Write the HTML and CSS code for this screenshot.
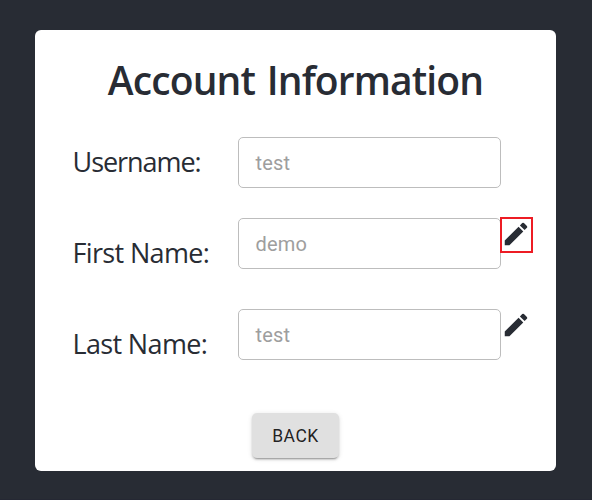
FILE: index.html
```html
<!DOCTYPE html>
<html lang="en">
<head>
<meta charset="utf-8">
<title>Account Information</title>
<link rel="stylesheet" href="styles.css">
</head>
<body>
<main class="card">
  <h1 class="title"><span class="title-text">Account Information</span></h1>
  <div class="row row-username">
    <span class="label label-username">Username:</span>
    <div class="field">test</div>
  </div>
  <div class="row row-name">
    <span class="label label-first">First Name:</span>
    <div class="field">demo</div>
    <span class="edit highlighted"><svg class="icon" viewBox="0 0 24 24"><path d="M3 17.25V21h3.75L17.81 9.94l-3.75-3.75L3 17.25zM20.71 7.04c.39-.39.39-1.02 0-1.41l-2.34-2.34a.996.996 0 0 0-1.41 0l-1.83 1.83 3.75 3.75 1.83-1.83z"/></svg></span>
  </div>
  <div class="row row-name">
    <span class="label label-last">Last Name:</span>
    <div class="field">test</div>
    <span class="edit"><svg class="icon" viewBox="0 0 24 24"><path d="M3 17.25V21h3.75L17.81 9.94l-3.75-3.75L3 17.25zM20.71 7.04c.39-.39.39-1.02 0-1.41l-2.34-2.34a.996.996 0 0 0-1.41 0l-1.83 1.83 3.75 3.75 1.83-1.83z"/></svg></span>
  </div>
  <button class="back">BACK</button>
</main>
</body>
</html>
```
FILE: styles.css
```css
* { box-sizing: border-box; }
body {
  margin: 0;
  height: 500px;
  padding: 30px 36px 28px 35px;
  border-bottom: 1px solid #252833;
  background: #282c34;
  color: #282c34;
  font-family: "Open Sans", "Noto Sans", sans-serif;
  overflow: hidden;
}
.card {
  height: 441px;
  padding: 25px 0 0 38px;
  background: #fff;
  border-radius: 6px;
  display: flex;
  flex-direction: column;
}
.title {
  margin: 0 38px 0 0;
  height: 52px;
  line-height: 50px;
  font-size: 39px;
  font-weight: 600;
  text-align: center;
  white-space: nowrap;
}
.title-text { letter-spacing: -0.88px; word-spacing: 2.5px; }
.row {
  display: grid;
  grid-template-columns: 165px 263px 33px;
  height: 51px;
}
.row-username { margin-top: 30px; }
.row-name { margin-top: 30px; }
.row-name + .row-name { margin-top: 40px; }
.label {
  margin-left: -0.5px;
  font-size: 27px;
  line-height: 50px;
  white-space: nowrap;
}
.row-name .label { padding-top: 10px; }
.label-username { letter-spacing: -1.05px; }
.label-first { letter-spacing: -0.65px; }
.label-last { letter-spacing: -0.65px; }
.field {
  height: 51px;
  padding-left: 16.5px;
  border: 1px solid #bdbdbd;
  border-radius: 5px;
  color: #9e9e9e;
  font: 20px/51px Roboto, sans-serif;
  letter-spacing: 0.2px;
}
.edit {
  width: 33px;
  height: 36px;
  margin: -1px 0 0 -1px;
  border: 2px solid transparent;
}
.highlighted { border-color: #ed1c24; }
.icon {
  display: block;
  width: 30px;
  height: 30px;
  margin: 0 0 0 -1px;
  fill: #282c34;
}
.back {
  align-self: center;
  width: 87px;
  height: 45px;
  margin: 53px 39px 0 0;
  padding: 2px 0 0 1px;
  border: 0;
  border-radius: 5px;
  background: #e0e0e0;
  color: rgba(0, 0, 0, 0.87);
  font: 400 17.5px/43px Roboto, sans-serif;
  letter-spacing: 0.5px;
  box-shadow: 0 3px 1px -2px rgba(0, 0, 0, 0.2), 0 2px 2px 0 rgba(0, 0, 0, 0.14), 0 1px 5px 0 rgba(0, 0, 0, 0.12);
}
```
